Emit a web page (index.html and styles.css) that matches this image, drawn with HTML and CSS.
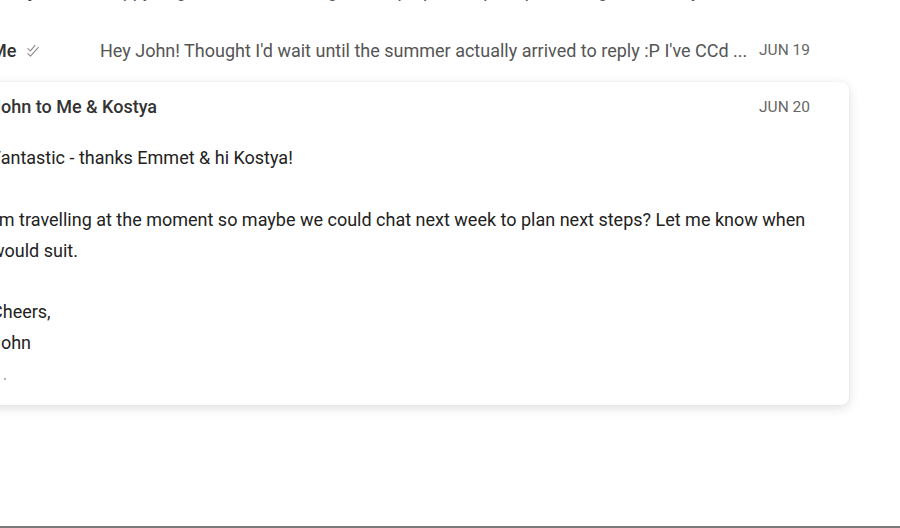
FILE: index.html
```html
<!DOCTYPE html>
<html>
<head>
<meta charset="utf-8">
<link rel="stylesheet" href="styles.css">
</head>
<body>
<div class="viewport">
  <div class="thread">
    <div class="row">
      <span class="sender">Kostya</span>
      <span class="mark"></span>
      <span class="snippet">Happy to go ahead - sounds good, I'll prepare a quick plan and get back to you</span>
      <span class="date">JUN 18</span>
    </div>
    <div class="row">
      <span class="sender">Me</span>
      <span class="mark">
        <svg width="14" height="14" viewBox="0 0 12 12" fill="none" stroke="#8a8a8a" stroke-width="0.95" stroke-linecap="round" stroke-linejoin="round">
          <path d="M1.6 3.9 L3.8 5.9 L7.7 1.2"/>
          <path d="M1.6 8.3 L3.8 10.4 L10.6 2.9"/>
        </svg>
      </span>
      <span class="snippet">Hey John! Thought I'd wait until the summer actually arrived to reply :P I've CCd ...</span>
      <span class="date">JUN 19</span>
    </div>
    <div class="card">
      <div class="card-head">
        <span class="from">John to Me &amp; Kostya</span>
        <span class="date">JUN 20</span>
      </div>
      <div class="card-body">
        <p>Fantastic - thanks Emmet &amp; hi Kostya!</p>
        <p>I'm travelling at the moment so maybe we could chat next week to plan next steps? Let me know when would suit.</p>
        <p>Cheers,<br>John</p>
        <div class="more"><span class="dot"></span><span class="dot"></span><span class="dot"></span></div>
      </div>
    </div>
  </div>
  <div class="bottom-edge"></div>
</div>
</body>
</html>
```
FILE: styles.css
```css
html, body {
  margin: 0;
  padding: 0;
  background: #ffffff;
}
body {
  font-family: Roboto, "Noto Sans", sans-serif;
  color: #222222;
  overflow: hidden;
}
.viewport {
  width: 900px;
  height: 528px;
  display: flex;
  flex-direction: column;
  overflow: hidden;
}
.thread {
  flex: 1;
  margin-top: -40px;
  margin-left: -40px;
  width: 889px;
}
.row {
  height: 60px;
  display: flex;
  align-items: center;
  padding: 0 39px 0 31px;
  font-size: 18px;
}
.sender {
  width: 35px;
  font-weight: 500;
  color: #333;
  white-space: nowrap;
}
.mark {
  width: 74px;
  display: flex;
  align-items: center;
  padding-top: 1px;
}
.snippet {
  flex: 1;
  color: #555;
  white-space: nowrap;
  overflow: hidden;
}
.date {
  font-size: 15.5px;
  color: #666;
  margin-left: 12px;
}
.card {
  margin-top: 2px;
  background: #fff;
  border-radius: 8px;
  box-shadow: 0 3px 12px rgba(0, 0, 0, 0.13), 0 0 2px rgba(0, 0, 0, 0.06);
  padding: 0 39px 0 31px;
  height: 323px;
  box-sizing: border-box;
}
.card-head {
  height: 50px;
  display: flex;
  align-items: center;
  justify-content: space-between;
  font-size: 18px;
  padding-bottom: 2px;
  box-sizing: border-box;
}
.card-head .date {
  margin-right: 0;
  padding-top: 2px;
}
.from {
  font-weight: 500;
  color: #333;
}
.card-body {
  font-size: 18px;
  line-height: 31px;
  color: #222;
  padding-top: 10px;
}
.card-body p {
  margin: 0 0 30.5px 0;
}
.card-body p:nth-last-of-type(1) {
  margin-bottom: 20px;
}
.more {
  display: flex;
  gap: 5px;
  margin-left: -1px;
}
.dot {
  width: 2px;
  height: 2px;
  border-radius: 50%;
  background: #9a9a9a;
}
.bottom-edge {
  height: 2px;
  background: #7a7a7a;
}
```
